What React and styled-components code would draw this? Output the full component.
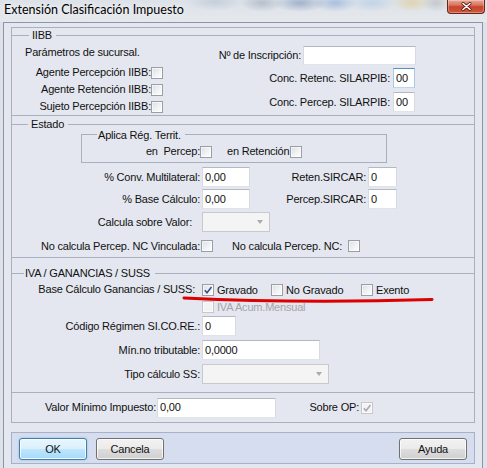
import styled, { createGlobalStyle, css } from 'styled-components';

const LINE = '#a9b0bd';
const FACE = '#e4e7ef';

const GlobalStyle = createGlobalStyle`
  html, body {
    margin: 0;
    padding: 0;
    background: #dde2e9;
  }
  body {
    font-family: "Liberation Sans", Arial, sans-serif;
    font-size: 11px;
    letter-spacing: -0.2px;
    color: #111;
  }
  * {
    box-sizing: border-box;
  }
`;

const Window = styled.div`
  width: 487px;
  height: 468px;
  display: flex;
  flex-direction: column;
  overflow: hidden;
  background: #dde2e9;
`;

const TitleBar = styled.div`
  height: 22px;
  flex-shrink: 0;
  display: flex;
  align-items: flex-start;
  background:
    radial-gradient(ellipse 28px 9px at 215px 2px, rgba(150, 170, 195, 0.35), transparent),
    radial-gradient(ellipse 22px 9px at 262px 3px, rgba(110, 125, 150, 0.35), transparent),
    radial-gradient(ellipse 26px 9px at 300px 3px, rgba(70, 105, 160, 0.4), transparent),
    radial-gradient(ellipse 22px 9px at 335px 3px, rgba(90, 140, 205, 0.4), transparent),
    radial-gradient(ellipse 24px 9px at 372px 3px, rgba(140, 185, 225, 0.35), transparent),
    radial-gradient(ellipse 20px 9px at 412px 3px, rgba(225, 190, 95, 0.4), transparent),
    radial-gradient(ellipse 14px 9px at 436px 3px, rgba(140, 140, 140, 0.3), transparent),
    linear-gradient(#dde2e8, #e5e9ee);
`;

const TitleText = styled.div`
  padding-left: 4px;
  line-height: 20px;
  font-family: Lato, "Liberation Sans", sans-serif;
  font-size: 12.5px;
  letter-spacing: 0;
  color: #000;
  text-shadow: 0 0 6px rgba(255, 255, 255, 0.95);
`;

const CloseButton = styled.div`
  margin-left: auto;
  margin-right: 2px;
  width: 38px;
  height: 14px;
  border: 1px solid #6a241b;
  border-top: none;
  border-radius: 0 0 4px 4px;
  background: linear-gradient(#e9a898 0%, #d9735d 40%, #c7442b 52%, #cf5a3e 100%);
  box-shadow: inset 0 0 0 1px rgba(255, 255, 255, 0.3);
  display: flex;
  align-items: center;
  justify-content: center;
`;

const Client = styled.div`
  flex: 1;
  margin: 0 4px 0 3px;
  border: 1px solid #8b95a3;
  border-bottom: none;
  background: ${FACE};
  padding: 4px 7px 0;
  display: flex;
  flex-direction: column;
`;

const Panel = styled.div`
  border: 1px solid ${LINE};
  display: flex;
  flex-direction: column;
`;

const Group = styled.div`
  position: relative;
  display: flex;
  flex-direction: column;
  border-bottom: 1px solid ${LINE};
`;

const GroupHead = styled.div`
  display: flex;
  align-items: center;
  flex-shrink: 0;
  height: 11px;
  line-height: 11px;
  margin-top: ${(p) => p.$top || 0}px;

  &::before {
    content: '';
    flex-shrink: 0;
    width: ${(p) => p.$lead}px;
    height: 1px;
    background: ${LINE};
  }

  &::after {
    content: '';
    flex: 1;
    height: 1px;
    background: ${LINE};
  }

  ${(p) =>
    p.$boxed &&
    css`
      &::before,
      &::after {
        align-self: flex-end;
        height: 6px;
        background: none;
        border-top: 1px solid ${LINE};
      }
      &::before {
        border-left: 1px solid ${LINE};
      }
      &::after {
        border-right: 1px solid ${LINE};
      }
    `}
`;

const HeadText = styled.span`
  white-space: nowrap;
  padding: 0 ${(p) => p.$pr}px 0 ${(p) => p.$pl}px;
`;

const IibbBody = styled.div`
  display: flex;
  height: 74px;
`;

const LeftCol = styled.div`
  width: 151px;
  flex-shrink: 0;
  padding-top: 5px;
  display: flex;
  flex-direction: column;
`;

const RightCol = styled.div`
  width: 253px;
  flex-shrink: 0;
  padding-top: 5px;
  display: flex;
  flex-direction: column;
  align-items: flex-end;
`;

const Note = styled.div`
  padding-left: 13px;
  line-height: 13px;
  height: 13px;
  margin-bottom: 5px;
  white-space: nowrap;
`;

const Section = styled.div`
  display: flex;
  flex-direction: column;
  padding-bottom: ${(p) => p.$pb || 0}px;
`;

const SubGroup = styled.div`
  margin-left: 69px;
  width: 306px;
  display: flex;
  flex-direction: column;
`;

const SubBody = styled.div`
  height: 22px;
  border: 1px solid ${LINE};
  border-top: none;
  display: flex;
  align-items: center;
`;

const Row = styled.div`
  display: flex;
  align-items: center;
  flex-shrink: 0;
  height: ${(p) => p.$h || 20}px;
  margin-top: ${(p) => p.$mt || 0}px;
  margin-right: ${(p) => p.$mr || 0}px;
`;

const FieldLabel = styled.span`
  flex-shrink: 0;
  white-space: nowrap;
  overflow: hidden;
  line-height: 13px;
  width: ${(p) => (p.$w ? `${p.$w}px` : 'auto')};
  text-align: ${(p) => (p.$left ? 'left' : 'right')};
  padding-right: ${(p) => p.$pr || 0}px;
  margin-left: ${(p) => p.$ml || 0}px;
  color: ${(p) => (p.$muted ? '#a3a5aa' : '#111')};
`;

const TextBox = styled.div`
  flex-shrink: 0;
  width: ${(p) => p.$w}px;
  height: ${(p) => p.$h || 20}px;
  margin-left: ${(p) => p.$ml || 0}px;
  background: #fff;
  border: 1px solid;
  border-color: #b4b8c0 #d6dae2 #dfe4ea #d6dae2;
  padding-left: 2px;
  display: flex;
  align-items: center;
  line-height: 13px;
  white-space: nowrap;

  ${(p) =>
    p.$focus &&
    css`
      border-color: #5b8fc0 #a8c9e4 #b9d8ee #a8c9e4;
    `}
`;

const DropBox = styled.div`
  flex-shrink: 0;
  width: ${(p) => p.$w}px;
  height: 20px;
  margin-left: ${(p) => p.$ml || 0}px;
  border: 1px solid #c6c9ce;
  background: #f4f4f5;
  display: flex;
  align-items: center;
  justify-content: flex-end;
  padding-right: 6px;

  &::after {
    content: '';
    width: 0;
    height: 0;
    border-left: 3.5px solid transparent;
    border-right: 3.5px solid transparent;
    border-top: 4px solid #a9abaf;
  }
`;

const CheckBox = styled.span`
  flex-shrink: 0;
  width: 12px;
  height: 12px;
  margin-left: ${(p) => p.$ml || 0}px;
  border: 1px solid ${(p) => (p.$disabled ? '#c6c8cc' : '#9a9ea6')};
  background: ${(p) =>
    p.$disabled
      ? '#f3f3f5'
      : 'linear-gradient(135deg, #dcdee2 0%, #f1f2f4 55%, #ffffff 100%)'};
  box-shadow: inset 0 0 0 1px rgba(255, 255, 255, 0.6);
  display: flex;
  align-items: center;
  justify-content: center;
`;

const Option = styled.div`
  flex-shrink: 0;
  display: flex;
  align-items: center;
  width: ${(p) => (p.$w ? `${p.$w}px` : 'auto')};
  margin-left: ${(p) => p.$ml || 0}px;
  gap: 3px;
  color: ${(p) => (p.$muted ? '#a3a5aa' : '#111')};
  white-space: nowrap;
`;

const Annotation = styled.svg`
  position: absolute;
  left: 170px;
  top: 37px;
  pointer-events: none;
`;

const BottomRow = styled.div`
  height: 29px;
  display: flex;
  align-items: center;
`;

const ButtonBar = styled.div`
  margin-top: 9px;
  height: 32px;
  flex-shrink: 0;
  border: 1px solid #a6b2c7;
  background: #d5ddee;
  display: flex;
  align-items: flex-start;
  gap: 9px;
  padding: 5px 7px 0;
`;

const Spacer = styled.div`
  flex: 1;
`;

const Button = styled.div`
  width: 68px;
  height: 22px;
  border: 1px solid #707070;
  border-radius: 3px;
  background: linear-gradient(#f2f2f2 0%, #ebebeb 48%, #dddddd 52%, #cfcfcf 100%);
  box-shadow: inset 0 0 0 1px rgba(255, 255, 255, 0.75);
  display: flex;
  align-items: center;
  justify-content: center;
  font-size: 11px;

  ${(p) =>
    p.$primary &&
    css`
      border-color: #3c7fb1;
      background: linear-gradient(#eaf6fd 0%, #d9f0fc 48%, #bee6fd 52%, #a7d9f5 100%);
      box-shadow: inset 0 0 0 1px rgba(255, 255, 255, 0.8), 0 0 2px rgba(60, 160, 230, 0.6);
    `}
`;

function Check({ checked, disabled, ml }) {
  return (
    <CheckBox $disabled={disabled} $ml={ml}>
      {checked && (
        <svg width="10" height="10" viewBox="0 0 10 10">
          <path
            d="M1.8 5.3 L4 7.8 L8.5 2"
            fill="none"
            stroke={disabled ? '#a9abb0' : '#34528c'}
            strokeWidth="1.6"
          />
        </svg>
      )}
    </CheckBox>
  );
}

export default function App() {
  return (
    <>
      <GlobalStyle />
      <Window>
        <TitleBar>
          <TitleText>Extensión Clasificación Impuesto</TitleText>
          <CloseButton>
            <svg width="11" height="9" viewBox="0 0 11 9">
              <path d="M2 1.5 L9 7.5 M9 1.5 L2 7.5" stroke="#5a1a12" strokeWidth="3" strokeLinecap="round" />
              <path d="M2 1.5 L9 7.5 M9 1.5 L2 7.5" stroke="#ffffff" strokeWidth="1.6" strokeLinecap="round" />
            </svg>
          </CloseButton>
        </TitleBar>

        <Client>
          <Panel>
            <Group>
              <GroupHead $top={2} $lead={17}>
                <HeadText $pl={3} $pr={4}>IIBB</HeadText>
              </GroupHead>
              <IibbBody>
                <LeftCol>
                  <Note>Parámetros de sucursal.</Note>
                  <Row $h={17}>
                    <FieldLabel $w={139}>Agente Percepción IIBB:</FieldLabel>
                    <Check />
                  </Row>
                  <Row $h={17}>
                    <FieldLabel $w={139}>Agente Retención IIBB:</FieldLabel>
                    <Check />
                  </Row>
                  <Row $h={17}>
                    <FieldLabel $w={139}>Sujeto Percepción IIBB:</FieldLabel>
                    <Check />
                  </Row>
                </LeftCol>
                <RightCol>
                  <Row $h={19}>
                    <FieldLabel>Nº de Inscripción:</FieldLabel>
                    <TextBox $w={113} $h={19} $ml={2} />
                  </Row>
                  <Row $mt={3} $mr={1}>
                    <FieldLabel>Conc. Retenc. SILARPIB:</FieldLabel>
                    <TextBox $w={22} $ml={3} $focus>00</TextBox>
                  </Row>
                  <Row $mt={4} $mr={1}>
                    <FieldLabel>Conc. Percep. SILARPIB:</FieldLabel>
                    <TextBox $w={22} $ml={3}>00</TextBox>
                  </Row>
                </RightCol>
              </IibbBody>
            </Group>

            <Group>
              <GroupHead $top={3} $lead={16}>
                <HeadText $pl={3} $pr={4}>Estado</HeadText>
              </GroupHead>
              <Section $pb={3}>
                <SubGroup>
                  <GroupHead $boxed $lead={15}>
                    <HeadText $pl={1} $pr={4}>Aplica Rég. Territ.</HeadText>
                  </GroupHead>
                  <SubBody>
                    <FieldLabel $w={118}>en&nbsp; Percep:</FieldLabel>
                    <Check ml={0} />
                    <FieldLabel $w={63} $left $ml={15}>en Retención</FieldLabel>
                    <Check />
                  </SubBody>
                </SubGroup>
                <Row $mt={4}>
                  <FieldLabel $w={188}>% Conv. Multilateral:</FieldLabel>
                  <TextBox $w={48} $ml={2}>0,00</TextBox>
                  <FieldLabel $w={116}>Reten.SIRCAR:</FieldLabel>
                  <TextBox $w={29} $ml={2}>0</TextBox>
                </Row>
                <Row $mt={2}>
                  <FieldLabel $w={188}>% Base Cálculo:</FieldLabel>
                  <TextBox $w={48} $ml={2}>0,00</TextBox>
                  <FieldLabel $w={116}>Percep.SIRCAR:</FieldLabel>
                  <TextBox $w={29} $ml={2}>0</TextBox>
                </Row>
                <Row $mt={3}>
                  <FieldLabel $w={180}>Calcula sobre Valor:</FieldLabel>
                  <DropBox $w={68} $ml={10} />
                </Row>
                <Row $mt={6} $h={16}>
                  <FieldLabel $w={188}>No calcula Percep. NC Vinculada:</FieldLabel>
                  <Check ml={1} />
                  <FieldLabel $w={129}>No calcula Percep. NC:</FieldLabel>
                  <Check ml={6} />
                </Row>
              </Section>
            </Group>

            <Group>
              <GroupHead $top={10} $lead={12}>
                <HeadText $pl={1} $pr={5}>IVA / GANANCIAS / SUSS</HeadText>
              </GroupHead>
              <Section $pb={8}>
                <Row $mt={3} $h={15}>
                  <FieldLabel $w={183}>Base Cálculo Ganancias / SUSS:</FieldLabel>
                  <Option $w={69} $ml={7}>
                    <Check checked />
                    Gravado
                  </Option>
                  <Option $w={90}>
                    <Check />
                    No Gravado
                  </Option>
                  <Option>
                    <Check />
                    Exento
                  </Option>
                </Row>
                <Row $mt={2} $h={15}>
                  <Option $ml={190} $muted>
                    <Check disabled />
                    IVA Acum.Mensual
                  </Option>
                </Row>
                <Row $mt={2}>
                  <FieldLabel $w={188}>Código Régimen SI.CO.RE.:</FieldLabel>
                  <TextBox $w={34} $ml={2}>0</TextBox>
                </Row>
                <Row $mt={4}>
                  <FieldLabel $w={188}>Mín.no tributable:</FieldLabel>
                  <TextBox $w={118} $ml={2}>0,0000</TextBox>
                </Row>
                <Row $mt={4}>
                  <FieldLabel $w={188}>Tipo cálculo SS:</FieldLabel>
                  <DropBox $w={127} $ml={2} />
                </Row>
              </Section>
              <Annotation width="256" height="10" viewBox="0 0 256 10">
                <path
                  d="M2 3 Q118 8.5 250 4.5"
                  fill="none"
                  stroke="#dc0000"
                  strokeWidth="3"
                  strokeLinecap="round"
                />
              </Annotation>
            </Group>

            <BottomRow>
              <FieldLabel $w={144}>Valor Mínimo Impuesto:</FieldLabel>
              <TextBox $w={119} $ml={1}>0,00</TextBox>
              <FieldLabel $w={83}>Sobre OP:</FieldLabel>
              <Check checked disabled ml={2} />
            </BottomRow>
          </Panel>

          <ButtonBar>
            <Button $primary>OK</Button>
            <Button>Cancela</Button>
            <Spacer />
            <Button>Ayuda</Button>
          </ButtonBar>
        </Client>
      </Window>
    </>
  );
}
